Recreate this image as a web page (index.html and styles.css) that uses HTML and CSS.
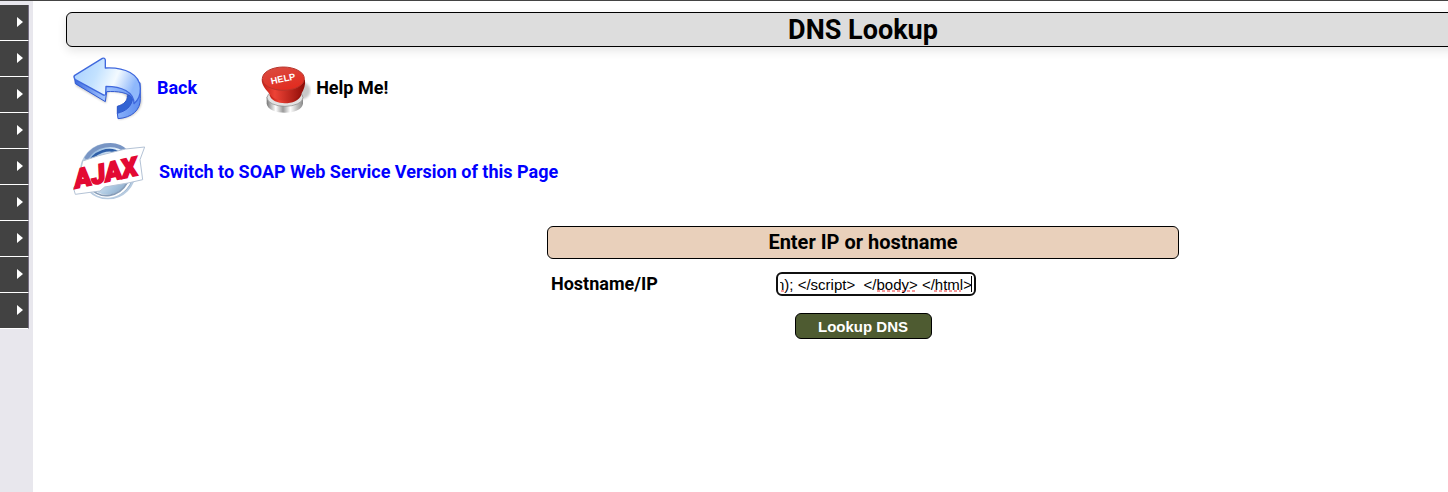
FILE: index.html
```html
<!DOCTYPE html>
<html lang="en">
<head>
<meta charset="utf-8">
<title>DNS Lookup</title>
<link rel="stylesheet" href="styles.css">
</head>
<body>
<nav class="sidebar" aria-label="Main menu">
  <ul class="menu">
    <li class="menu-item"></li><li class="menu-item"></li><li class="menu-item"></li>
    <li class="menu-item"></li><li class="menu-item"></li><li class="menu-item"></li>
    <li class="menu-item"></li><li class="menu-item"></li><li class="menu-item"></li>
  </ul>
</nav>
<main class="content">
  <h1 class="page-title">DNS Lookup</h1>
  <div class="actions">
    <a class="action back" href="#">
      <svg width="72" height="66" viewBox="18 12 212 198" aria-hidden="true">
        <defs>
          <linearGradient id="top" x1="0" y1="0" x2="1" y2="0.3"><stop offset="0" stop-color="#a6ceff"/><stop offset=".4" stop-color="#c3e2ff"/><stop offset=".7" stop-color="#f3faff"/><stop offset="1" stop-color="#8fb8fb"/></linearGradient>
          <linearGradient id="side" x1="0" y1="0" x2="1" y2="0"><stop offset="0" stop-color="#3c6ae0"/><stop offset=".45" stop-color="#a3c6ff"/><stop offset="1" stop-color="#5c8cf0"/></linearGradient>
          <filter id="soft" x="-20%" y="-20%" width="140%" height="140%"><feGaussianBlur stdDeviation="3"/></filter>
        </defs>
        <path d="M26 80L29 105L118 156L124 122C160 122 180 128 182 142C182 155 170 164 155 170L158 206C200 200 226 178 225 145L222 98" fill="#777" opacity=".45" filter="url(#soft)"/>
        <path d="M152 166C172 160 183 150 182 134L200 128C206 165 186 182 152 188Z" fill="#3263d3" stroke="#2750c4" stroke-width="3"/>
        <path d="M23 75L26 98L116 152L120 122C152 120 184 124 198 142C194 168 178 180 152 187L154 203C195 200 222 178 221 142L220 95Z" fill="url(#side)" stroke="#3159d1" stroke-width="3" stroke-linejoin="round"/>
        <path d="M23 74L107 22Q114 19 116 27V51C175 48 220 70 221 112C222 132 214 148 202 158C202 122 164 106 118 106L117 130Q114 135 107 130L26 86Q20 79 23 74Z" fill="url(#top)" stroke="#3f68dd" stroke-width="4" stroke-linejoin="round"/>
      </svg>
      <span>Back</span>
    </a>
    <span class="action help">
      <svg width="52" height="58" viewBox="28 3 156 174" aria-hidden="true">
        <defs>
          <linearGradient id="metal" x1="0" y1="0" x2="1" y2="0"><stop offset="0" stop-color="#777"/><stop offset=".25" stop-color="#fff"/><stop offset=".45" stop-color="#999"/><stop offset=".65" stop-color="#fff"/><stop offset="1" stop-color="#888"/></linearGradient>
          <linearGradient id="body" x1="0" y1="0" x2="1" y2="0"><stop offset="0" stop-color="#c01d14"/><stop offset=".3" stop-color="#ed4336"/><stop offset="1" stop-color="#8d0b06"/></linearGradient>
          <linearGradient id="cap" x1="0" y1="0" x2=".5" y2="1"><stop offset="0" stop-color="#d94e43"/><stop offset="1" stop-color="#e22c20"/></linearGradient>
        </defs>
        <ellipse cx="148" cy="98" rx="34" ry="28" fill="#777" opacity=".4" filter="url(#soft)"/>
        <path d="M51 116V137C56 173 155 173 160 137V112Z" fill="url(#metal)"/>
        <ellipse cx="106" cy="119" rx="54" ry="26" fill="#e2e2e2" stroke="#888" stroke-width="2"/>
        <path d="M60 94V112C68 144 144 144 155 110V92Z" fill="url(#body)"/>
        <path d="M36 64C36 85 52 98 60 109C78 136 138 134 155 107C163 94 168 80 166 65Z" fill="url(#body)"/>
        <ellipse cx="101" cy="62" rx="63" ry="35" fill="url(#cap)" stroke="#b7352c" stroke-width="3"/>
        <text class="help-cap" x="100" y="72" text-anchor="middle" transform="rotate(-12 100 62)">HELP</text>
      </svg>
      <span>Help Me!</span>
    </span>
  </div>
  <a class="action switch" href="#">
    <svg class="ajax" width="74" height="62" viewBox="18 20 222 186" aria-hidden="true">
      <defs><linearGradient id="disc" x1="0" y1="0" x2="1" y2="1"><stop offset="0" stop-color="#407fc1"/><stop offset=".4" stop-color="#eff8ff"/><stop offset=".7" stop-color="#a8c5df"/><stop offset="1" stop-color="#6c8aae"/></linearGradient></defs>
      <circle cx="126" cy="111" r="81" fill="url(#disc)" stroke="#b7cbe0" stroke-width="6"/>
      <path d="M60 74C82 31 147 16 184 54" fill="none" stroke="#7895c4" stroke-width="12"/>
      <path d="M66 92C82 52 130 35 164 58" fill="none" stroke="#2e5fa8" stroke-width="8"/>
      <path d="M64 150C95 205 175 195 195 130" fill="none" stroke="#fff" stroke-width="9"/>
      <path d="M72 161C105 198 160 188 184 145" fill="none" stroke="#879db8" stroke-width="5"/>
      <path d="M50 80L98 64L178 44L236 38L222 76L230 136L186 146L116 158L102 170L28 180L22 160L36 146Z" fill="#fff" stroke="#b4c3d6" stroke-width="3" stroke-linejoin="round"/>
      <text class="ajax-logo" x="30" y="162" transform="rotate(-12 30 162)">AJAX</text>
    </svg>
    <span>Switch to SOAP Web Service Version of this Page</span>
  </a>
  <form class="lookup">
    <h2 class="form-title">Enter IP or hostname</h2>
    <div class="field">
      <label for="host">Hostname/IP</label>
      <div class="input-wrap">
        <input id="host" type="text" spellcheck="false" autofocus value="n); &lt;/script&gt;  &lt;/body&gt; &lt;/html&gt;">
        <svg class="spelling" width="200" height="24" viewBox="0 0 200 24" aria-hidden="true"><path d="M5 19H9M101 19H140M158 19H185"/><path class="caret" d="M195 4V20"/></svg>
      </div>
    </div>
    <button class="submit" type="button">Lookup DNS</button>
  </form>
</main>
<script src="script.js"></script>
</body>
</html>
```

FILE: styles.css
```css
* { box-sizing: border-box; }
body {
  margin: 0;
  min-height: 100vh;
  display: flex;
  overflow: hidden;
  border-top: 1px solid #444;
  background: #fff;
  color: #000;
  font: bold 18px/24px Roboto, sans-serif;
}
.sidebar {
  flex: 0 0 33px;
  padding: 4px 4px 0 0;
  background: #e8e7ed;
}
.menu { margin: 0; padding: 0; list-style: none; }
.menu-item {
  height: 36px;
  display: flex;
  align-items: center;
  justify-content: flex-end;
  padding: 0 5px 2px 0;
  border-right: 1px solid #746d80;
  border-bottom: 1px solid #fff;
  background: #424242;
}
.menu-item::before {
  content: "";
  border: 5px solid transparent;
  border-left: 6px solid #fff;
  border-right: 0;
}
/* The content column is wider than the window and runs off its right side. */
.content {
  flex: 0 0 calc(100% + 179px);
  padding: 11px 0 0 33px;
}
.page-title {
  margin: 0;
  padding: 2px 1px 0;
  border: 1px solid #000;
  border-radius: 6px;
  background: #ddd;
  box-shadow: 0 4px 10px rgba(0, 0, 0, .1);
  font-size: 27px;
  line-height: 31px;
  text-align: center;
}
.actions {
  display: flex;
  gap: 62px;
  padding: 8px 0 0 6px;
}
.action { display: flex; align-items: center; }
.action svg { flex: none; }
a { color: #00f; text-decoration: none; }
.back { gap: 13px; }
.help { gap: 5px; }
.switch {
  width: max-content;
  gap: 13px;
  padding: 20px 0 0 6px;
}
.help-cap { fill: #fff; font: bold 28px "Liberation Sans", sans-serif; }
.ajax { overflow: visible; }
.ajax-logo {
  fill: #e30933;
  stroke: #e30933;
  stroke-width: 5px;
  font: italic 900 78px Roboto, sans-serif;
}
.lookup {
  width: 632px;
  margin: 23px auto 0;
}
.form-title {
  margin: 0;
  padding: 3px;
  border: 1px solid #000;
  border-radius: 6px;
  background: #e9d0bb;
  font-size: 20px;
  line-height: 25px;
  text-align: center;
}
.field {
  display: grid;
  grid-template-columns: 225px 200px;
  align-items: center;
  padding: 13px 4px 0;
}
.input-wrap { position: relative; height: 24px; }
.input-wrap input {
  display: block;
  width: 200px;
  height: 24px;
  padding: 1px 2px;
  border: 2px solid #101010;
  border-radius: 6px;
  outline: 0;
  background: #fff;
  color: #000;
  caret-color: transparent;
  font: 15px "Liberation Sans", Arial, sans-serif;
}
.spelling {
  position: absolute;
  inset: 0;
  pointer-events: none;
  fill: none;
  stroke: #e33;
  stroke-dasharray: 3 2;
}
.caret {
  stroke: #000;
  stroke-dasharray: none;
  shape-rendering: crispEdges;
}
.submit {
  display: block;
  width: 137px;
  height: 26px;
  margin: 17px auto 0;
  padding: 0;
  border: 1px solid #000;
  border-radius: 6px;
  background: #4e5b31;
  color: #fff;
  font: bold 15px "Liberation Sans", Arial, sans-serif;
}
```

FILE: script.js
```js
const host = document.getElementById("host");
host.focus();
host.setSelectionRange(host.value.length, host.value.length);
host.scrollLeft = host.scrollWidth;
```
